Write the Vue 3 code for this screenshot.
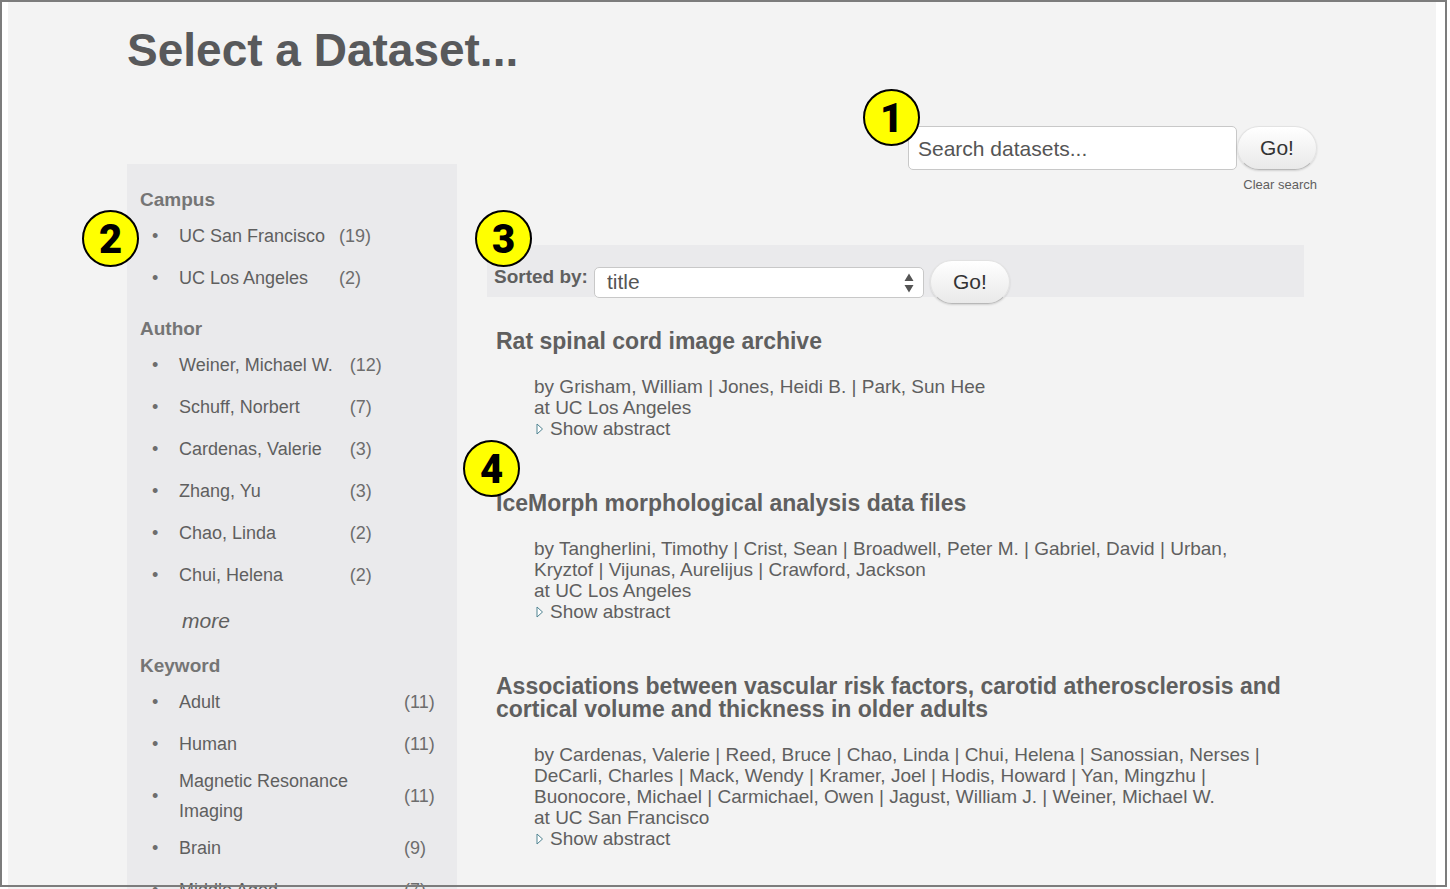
<script setup>
import { ref } from 'vue'

const query = ref('')
const sortKey = ref('title')

const facets = [
  {
    name: 'Campus',
    items: [
      { label: 'UC San Francisco', count: 19 },
      { label: 'UC Los Angeles', count: 2 },
    ],
  },
  {
    name: 'Author',
    more: true,
    items: [
      { label: 'Weiner, Michael W.', count: 12 },
      { label: 'Schuff, Norbert', count: 7 },
      { label: 'Cardenas, Valerie', count: 3 },
      { label: 'Zhang, Yu', count: 3 },
      { label: 'Chao, Linda', count: 2 },
      { label: 'Chui, Helena', count: 2 },
    ],
  },
  {
    name: 'Keyword',
    wide: true,
    items: [
      { label: 'Adult', count: 11 },
      { label: 'Human', count: 11 },
      { label: 'Magnetic Resonance Imaging', count: 11 },
      { label: 'Brain', count: 9 },
      { label: 'Middle Aged', count: 7 },
    ],
  },
]

const datasets = [
  {
    title: 'Rat spinal cord image archive',
    authors: ['Grisham, William', 'Jones, Heidi B.', 'Park, Sun Hee'],
    campus: 'UC Los Angeles',
  },
  {
    title: 'IceMorph morphological analysis data files',
    authors: [
      'Tangherlini, Timothy', 'Crist, Sean', 'Broadwell, Peter M.', 'Gabriel, David',
      'Urban, Kryztof', 'Vijunas, Aurelijus', 'Crawford, Jackson',
    ],
    campus: 'UC Los Angeles',
    badge: 4,
  },
  {
    title: 'Associations between vascular risk factors, carotid atherosclerosis and cortical volume and thickness in older adults',
    authors: [
      'Cardenas, Valerie', 'Reed, Bruce', 'Chao, Linda', 'Chui, Helena', 'Sanossian, Nerses',
      'DeCarli, Charles', 'Mack, Wendy', 'Kramer, Joel', 'Hodis, Howard', 'Yan, Mingzhu',
      'Buonocore, Michael', 'Carmichael, Owen', 'Jagust, William J.', 'Weiner, Michael W.',
    ],
    campus: 'UC San Francisco',
  },
]
</script>

<template>
  <div class="page">
    <div class="canvas">
      <h1>Select a Dataset...</h1>
      <div class="columns">
        <aside class="sidebar">
          <span class="badge badge-facets">2</span>
          <section v-for="facet in facets" :key="facet.name" class="facet">
            <h2>{{ facet.name }}</h2>
            <table :class="{ wide: facet.wide, expandable: facet.more }">
              <tbody>
                <tr v-for="item in facet.items" :key="item.label">
                  <td class="bullet">•</td>
                  <td class="label"><a href="#">{{ item.label }}</a></td>
                  <td class="count">({{ item.count }})</td>
                </tr>
              </tbody>
            </table>
            <a v-if="facet.more" class="more" href="#">more</a>
          </section>
        </aside>

        <main>
          <form class="search" @submit.prevent>
            <div class="search-row">
              <input v-model="query" type="text" placeholder="Search datasets..." aria-label="Search datasets" />
              <button class="go" type="submit">Go!</button>
              <span class="badge badge-search">1</span>
            </div>
            <a class="clear" href="#">Clear search</a>
          </form>

          <div class="results">
            <form class="sort" @submit.prevent>
              <div class="sort-row">
                <label for="sort-key">Sorted by:</label>
                <div class="select">
                  <select id="sort-key" v-model="sortKey">
                    <option value="title">title</option>
                    <option value="campus">campus</option>
                  </select>
                  <svg width="10" height="20" viewBox="0 0 10 20" aria-hidden="true">
                    <path d="M5 0.5 9.5 8H0.5ZM5 19.5 0.5 12H9.5Z" fill="#555" />
                  </svg>
                </div>
                <button class="go" type="submit">Go!</button>
              </div>
              <span class="badge badge-sort">3</span>
            </form>

            <article v-for="set in datasets" :key="set.title">
              <h3><a href="#">{{ set.title }}</a></h3>
              <div class="meta">
                <p>by <template v-for="(author, i) in set.authors" :key="author"><template v-if="i"> | </template><a href="#">{{ author }}</a></template></p>
                <p>at <a href="#">{{ set.campus }}</a></p>
                <button class="abstract" type="button">
                  <svg width="10" height="14" viewBox="0 0 10 14" aria-hidden="true">
                    <path d="M3 2V12L8.5 7Z" fill="#fff" stroke="#4f8391" stroke-width="1" />
                  </svg>
                  Show abstract
                </button>
              </div>
              <span v-if="set.badge" class="badge badge-result">{{ set.badge }}</span>
            </article>
          </div>
        </main>
      </div>
    </div>
    <div class="frame"></div>
  </div>
</template>

<style>
body {
  background: #fff;
}
</style>

<style scoped>
.page {
  position: relative;
  height: 100vh;
  overflow: hidden;
  box-sizing: border-box;
  padding: 0 14px 0 8px;
  font-family: "Liberation Sans", Arial, sans-serif;
  color: #5f5f5f;
}
.frame {
  position: absolute;
  inset: 0 3px 2px 0;
  border: 2px solid #7c7c7c;
  pointer-events: none;
}
.canvas {
  min-height: 100%;
  box-sizing: border-box;
  padding: 24px 119px 0 119px;
  background: #f3f3f3;
}
a {
  color: inherit;
  text-decoration: none;
}
h1 {
  margin: 0 0 50px;
  font-size: 46px;
  line-height: 52px;
  color: #58595b;
}
.columns {
  display: grid;
  grid-template-columns: 330px 1fr;
  gap: 30px;
  align-items: start;
}

/* facets */
.sidebar {
  position: relative;
  margin-top: 38px;
  padding: 19px 13px;
  background: #eaeaec;
  font-size: 18px;
  line-height: 30px;
}
.facet {
  margin-bottom: 13px;
}
.facet h2 {
  margin: 0;
  padding-top: 2px;
  font-size: 19px;
  line-height: 30px;
  color: #757575;
}
table {
  border-collapse: collapse;
}
table.wide {
  width: 100%;
}
td {
  height: 40px;
  padding: 1px 0;
  vertical-align: middle;
}
td.bullet {
  width: 27px;
  padding-left: 12px;
  color: #6d6d6d;
}
td.label {
  padding-right: 14px;
}
.expandable td.label {
  padding-right: 17px;
}
td.count {
  color: #6d6d6d;
}
.wide td.count {
  width: 40px;
}
.more {
  display: block;
  padding: 10px 0 0 42px;
  font-size: 21px;
  font-style: italic;
}

/* search */
.search {
  display: flex;
  flex-direction: column;
  align-items: flex-end;
  margin-bottom: 52px;
}
.search-row {
  position: relative;
  display: flex;
}
.search input {
  box-sizing: border-box;
  width: 329px;
  height: 44px;
  padding: 2px 9px 0;
  border: 1px solid #c8c8c8;
  border-radius: 5px;
  background: #fff;
  font: 21px "Liberation Sans", Arial, sans-serif;
  color: #555;
}
.search input::placeholder {
  color: #555;
  opacity: 1;
}
.go {
  width: 80px;
  height: 44px;
  padding: 0;
  border: 1px solid #e2e2e2;
  border-bottom-color: #b8b8b8;
  border-radius: 22px;
  background: linear-gradient(#fff, #e9e9e9);
  box-shadow: 0 1px 2px rgba(0, 0, 0, 0.14);
  font: 21px "Liberation Sans", Arial, sans-serif;
  color: #333;
}
.clear {
  margin-top: 7px;
  font-size: 13px;
  line-height: 16px;
}

/* results */
.results {
  padding-right: 13px;
}
.sort {
  position: relative;
  height: 52px;
  box-sizing: border-box;
  padding: 15px 7px 0;
  background: #eaeaec;
}
.sort-row {
  display: flex;
  align-items: center;
  gap: 6px;
}
.sort label {
  padding-bottom: 11px;
  font-size: 19px;
  line-height: 20px;
  font-weight: bold;
  color: #5f5f5f;
}
.select {
  position: relative;
  width: 330px;
}
.select select {
  display: block;
  width: 100%;
  height: 31px;
  padding: 0 12px 2px;
  border: 1px solid #c8c8c8;
  border-radius: 5px;
  background: #fff;
  appearance: none;
  font: 21px "Liberation Sans", Arial, sans-serif;
  color: #555;
}
.select svg {
  position: absolute;
  top: 6px;
  right: 10px;
  pointer-events: none;
}
article {
  position: relative;
  margin-top: 53px;
  padding-left: 9px;
}
.sort + article {
  margin-top: 33px;
}
h3 {
  margin: 0 0 23px;
  font-size: 23px;
  line-height: 23px;
}
.meta {
  padding: 0 20px 0 38px;
  font-size: 19px;
  line-height: 21px;
}
.meta p {
  margin: 0;
}
.abstract {
  display: flex;
  align-items: center;
  gap: 6px;
  padding: 0;
  border: 0;
  background: none;
  font: inherit;
  color: inherit;
}

/* numbered callouts */
.badge {
  position: absolute;
  z-index: 1;
  box-sizing: border-box;
  width: 57px;
  height: 57px;
  border: 2px solid #000;
  border-radius: 50%;
  background: #ff0;
  font: 900 40px/55px Roboto, sans-serif;
  text-align: center;
  color: #000;
}
.badge-search {
  left: -45px;
  top: -37px;
}
.badge-facets {
  left: -45px;
  top: 46px;
}
.badge-sort {
  left: -12px;
  top: -35px;
}
.badge-result {
  left: -24px;
  top: -52px;
}
</style>
